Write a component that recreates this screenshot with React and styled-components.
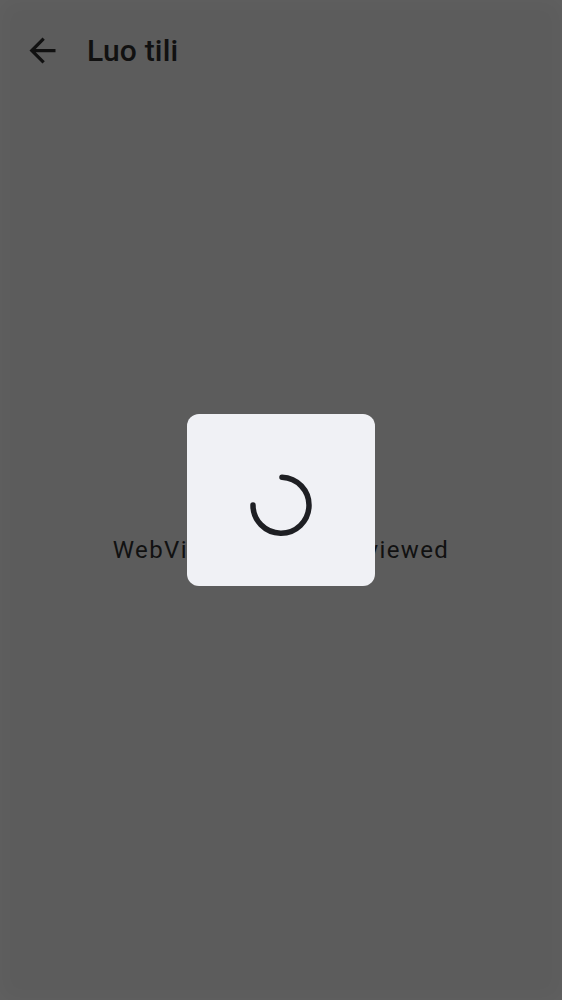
import React from "react";
import styled, { createGlobalStyle } from "styled-components";

const Global = createGlobalStyle`
  html, body { margin: 0; padding: 0; background: #5c5c5c; }
  #root { height: 1000px; }
`;

const Screen = styled.div`
  position: relative;
  width: 562px;
  height: 1000px;
  display: flex;
  flex-direction: column;
  background: #5c5c5c;
  font-family: Roboto, "Noto Sans", sans-serif;
  overflow: hidden;
  box-shadow: inset 0 0 18px 6px rgba(255, 255, 255, 0.025);
`;

const AppBar = styled.header`
  height: 100px;
  display: flex;
  align-items: center;
  padding-left: 23px;
  gap: 25px;
  flex-shrink: 0;
`;

const BackIcon = styled.svg`
  width: 39px;
  height: 39px;
  fill: #111111;
  display: block;
`;

const Title = styled.h1`
  margin: 0;
  font-size: 30px;
  font-weight: 500;
  color: #111111;
  letter-spacing: 0.2px;
`;

const Content = styled.main`
  flex: 1;
  display: flex;
  align-items: center;
  justify-content: center;
`;

const Message = styled.p`
  margin: 0;
  font-size: 24px;
  color: #111111;
  letter-spacing: 1.35px;
`;

const Backdrop = styled.div`
  position: absolute;
  inset: 0;
  display: flex;
  align-items: center;
  justify-content: center;
`;

const LoaderCard = styled.div`
  width: 188px;
  height: 172px;
  border-radius: 12px;
  background: #f0f1f5;
  display: flex;
  align-items: center;
  justify-content: center;
  padding-top: 10px;
  box-sizing: border-box;
`;

const Spinner = styled.svg`
  width: 64px;
  height: 64px;
  display: block;
`;

export default function App() {
  return (
    <>
      <Global />
      <Screen>
        <AppBar>
          <BackIcon viewBox="0 0 24 24">
            <path d="M20 11H7.83l5.59-5.59L12 4l-8 8 8 8 1.41-1.41L7.83 13H20v-2z" />
          </BackIcon>
          <Title>Luo tili</Title>
        </AppBar>
        <Content>
          <Message>WebView can't be previewed</Message>
        </Content>
        <Backdrop>
          <LoaderCard>
            <Spinner viewBox="0 0 64 64">
              <path
                d="M33 4.2 A28 28 0 1 1 4 32"
                fill="none"
                stroke="#1e1f23"
                strokeWidth="5.5"
                strokeLinecap="round"
              />
            </Spinner>
          </LoaderCard>
        </Backdrop>
      </Screen>
    </>
  );
}
